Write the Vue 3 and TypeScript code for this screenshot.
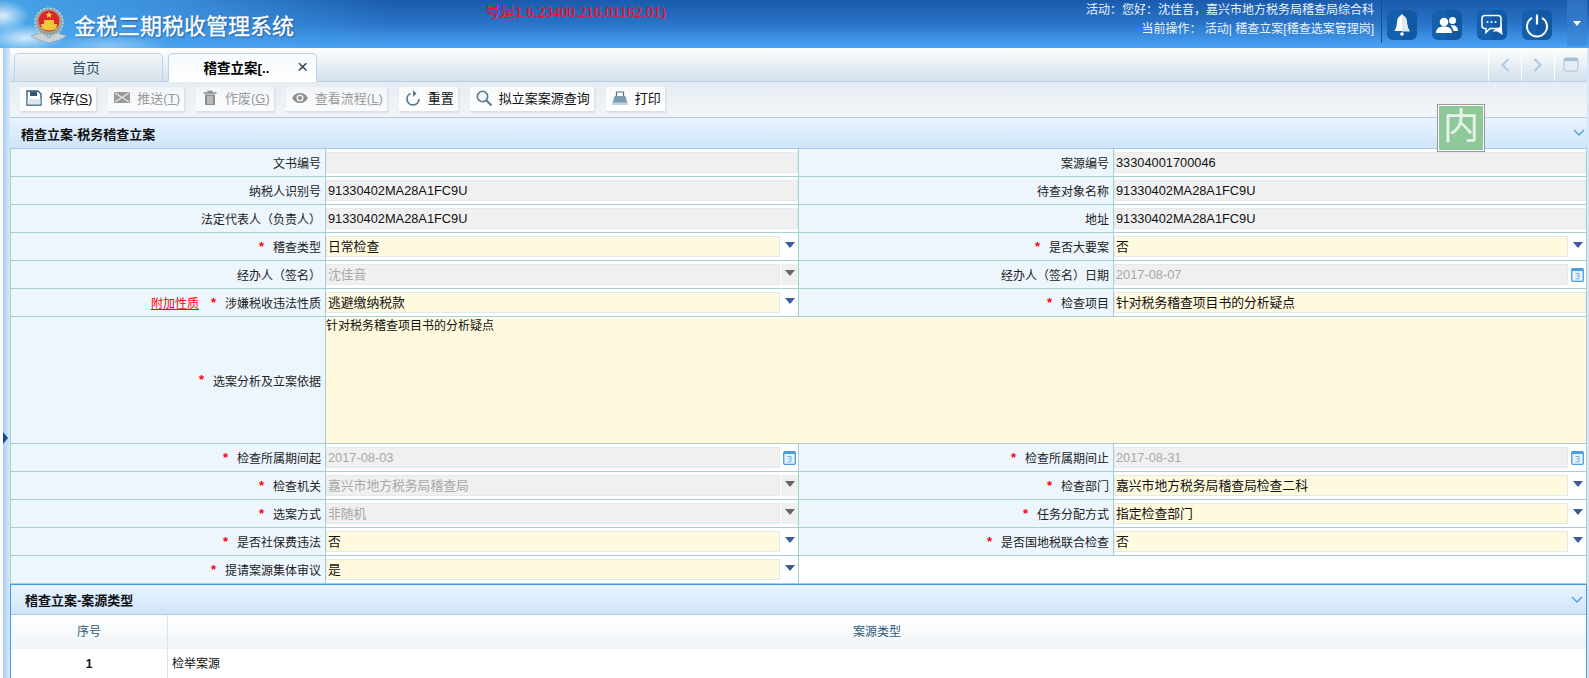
<script setup lang="ts">
interface Field {
  label: string
  value?: string
  req?: boolean
  kind?: 'ro' | 'edit' | 'off' | 'area' | 'empty'
  icon?: 'select' | 'date'
  link?: string
}
const SN = '91330402MA28A1FC9U'
const AREA = '针对税务稽查项目书的分析疑点'
const fields: Field[] = [
  { label: '文书编号', value: '', kind: 'ro' },
  { label: '案源编号', value: '33304001700046', kind: 'ro' },
  { label: '纳税人识别号', value: SN, kind: 'ro' },
  { label: '待查对象名称', value: SN, kind: 'ro' },
  { label: '法定代表人（负责人）', value: SN, kind: 'ro' },
  { label: '地址', value: SN, kind: 'ro' },
  { label: '稽查类型', value: '日常检查', req: true, kind: 'edit', icon: 'select' },
  { label: '是否大要案', value: '否', req: true, kind: 'edit', icon: 'select' },
  { label: '经办人（签名）', value: '沈佳音', kind: 'off', icon: 'select' },
  { label: '经办人（签名）日期', value: '2017-08-07', kind: 'off', icon: 'date' },
  { label: '涉嫌税收违法性质', value: '逃避缴纳税款', req: true, kind: 'edit', icon: 'select', link: '附加性质' },
  { label: '检查项目', value: AREA, req: true, kind: 'edit' },
  { label: '选案分析及立案依据', value: AREA, req: true, kind: 'area' },
  { label: '检查所属期间起', value: '2017-08-03', req: true, kind: 'off', icon: 'date' },
  { label: '检查所属期间止', value: '2017-08-31', req: true, kind: 'off', icon: 'date' },
  { label: '检查机关', value: '嘉兴市地方税务局稽查局', req: true, kind: 'off', icon: 'select' },
  { label: '检查部门', value: '嘉兴市地方税务局稽查局检查二科', req: true, kind: 'edit', icon: 'select' },
  { label: '选案方式', value: '非随机', req: true, kind: 'off', icon: 'select' },
  { label: '任务分配方式', value: '指定检查部门', req: true, kind: 'edit', icon: 'select' },
  { label: '是否社保费违法', value: '否', req: true, kind: 'edit', icon: 'select' },
  { label: '是否国地税联合检查', value: '否', req: true, kind: 'edit', icon: 'select' },
  { label: '提请案源集体审议', value: '是', req: true, kind: 'edit', icon: 'select' },
]
</script>

<template>
  <div class="page">
    <header class="top">
      <svg class="logo" viewBox="0 0 38 37" width="38" height="37">
        <path d="M1 29 L11 26 L19 31 L27 26 L37 29 L29 33 L19 36 L9 33 Z" fill="#c9d2d6" stroke="#8b9aa0" stroke-width=".6" />
        <circle cx="19" cy="15" r="14" fill="#9aa5a0" />
        <circle cx="19" cy="15" r="14" fill="none" stroke="#d7ddd9" stroke-width="1.2" stroke-dasharray="2 1.5" />
        <circle cx="19" cy="14" r="10.5" fill="#e0262a" />
        <path d="M19 4.5 l1 2.4 2.5.1-2 1.6.7 2.4-2.2-1.4-2.2 1.4.7-2.4-2-1.6 2.5-.1z" fill="#f6d43c" />
        <path d="M11 17h16v2H11zM14 13h10v4H14zM11 21q8 5 16 0l-1-2H12z" fill="#f0c93a" />
      </svg>
      <span class="title">金税三期税收管理系统</span>
      <span class="version">号是1.6.23400.216.01162.01)</span>
      <div class="who">
        <div>活动：您好：沈佳音，嘉兴市地方税务局稽查局综合科</div>
        <div>当前操作： 活动| 稽查立案[稽查选案管理岗]</div>
      </div>
      <div class="top-actions">
        <button class="round" type="button" aria-label="通知">
          <svg viewBox="0 0 30 30" width="30" height="30"><path d="M15 4.5c1 0 1.6.7 1.6 1.6 2.4.8 3.2 3 3.4 6 .2 4.300 1 6.700 2.800 9H7.200c1.800-2.300 2.600-4.700 2.800-9 .2-3 1-5.200 3.400-6 0-.9.600-1.600 1.600-1.600z" fill="#fff" /><path d="M15 6l3 1c1.500 2 2 9 4.800 14.600H15z" fill="#dfe7ef" /><circle cx="15" cy="24" r="1.800" fill="#fff" /></svg>
        </button>
        <button class="round" type="button" aria-label="用户">
          <svg viewBox="0 0 30 30" width="30" height="30"><circle cx="12" cy="12" r="4.300" fill="#fff" /><path d="M4 23c0-4.500 3-6.500 8-6.500s8 2 8 6.500z" fill="#fff" /><circle cx="20.500" cy="10.500" r="3.500" fill="#fff" /><path d="M18.500 15.500c4-1 7.500 1 7.500 5.500h-4.500c-.5-2.500-1.500-4-3-5.500z" fill="#fff" /></svg>
        </button>
        <button class="round" type="button" aria-label="消息">
          <svg viewBox="0 0 30 30" width="30" height="30"><path d="M8 5.500h13a3 3 0 0 1 3 3v7a3 3 0 0 1-3 3h-8l-4 4v-4H8a3 3 0 0 1-3-3v-7a3 3 0 0 1 3-3z" fill="none" stroke="#fff" stroke-width="1.500" /><circle cx="10.500" cy="12" r="1" fill="#fff" /><circle cx="14.500" cy="12" r="1" fill="#fff" /><circle cx="18.500" cy="12" r="1" fill="#fff" /><path d="M25 13v7l.5 5-5-3.500h-5l3-2.500h4z" fill="#fff" /></svg>
        </button>
        <button class="round" type="button" aria-label="退出">
          <svg viewBox="0 0 30 30" width="30" height="30"><path d="M10 7.800a10 10 0 1 0 10 0" fill="none" stroke="#fff" stroke-width="2" /><path d="M15 4.500v10" stroke="#fff" stroke-width="2.200" /></svg>
        </button>
      </div>
      <div class="more"><i></i></div>
    </header>

    <div class="body">
      <aside class="strip"><i class="strip-arrow"></i></aside>
      <main class="main">
        <nav class="tabs">
          <div class="tab">首页</div>
          <div class="tab active">稽查立案[..<span class="close">×</span></div>
          <div class="tab-tools">
            <span class="tool"><svg viewBox="0 0 12 16" width="12" height="16"><path d="M9.500 2 3.500 8l6 6" fill="none" stroke="#b3cbe2" stroke-width="2.200" /></svg></span>
            <span class="tool"><svg viewBox="0 0 12 16" width="12" height="16"><path d="M2.500 2l6 6-6 6" fill="none" stroke="#b3cbe2" stroke-width="2.200" /></svg></span>
            <span class="tool"><svg viewBox="0 0 16 15" width="16" height="15"><rect x="1" y="1" width="14" height="13" rx="2" fill="#e4edf5" stroke="#a9bfd3" /><rect x="1" y="1" width="14" height="3" fill="#a9bfd3" /></svg></span>
          </div>
        </nav>

        <div class="toolbar">
          <button class="btn" type="button">
            <svg viewBox="0 0 18 18" width="18" height="18"><path d="M2 2h11l3 3v11H2z" fill="#fff" stroke="#33566e" stroke-width="1.300" /><path d="M5 2.500h7v4.500H5z" fill="#33566e" /><path d="M2.500 10h13v5.500h-13z" fill="#dbe7f1" /></svg>
            <span>保存(<u>S</u>)</span>
          </button>
          <button class="btn off" type="button">
            <svg viewBox="0 0 18 18" width="18" height="18"><rect x="1" y="3" width="16" height="11" fill="#9a9a9a" /><path d="M2 4l14 9M16 4 2 13" stroke="#e8e8e8" stroke-width="1.300" /></svg>
            <span>推送(<u>T</u>)</span>
          </button>
          <button class="btn off" type="button">
            <svg viewBox="0 0 18 18" width="18" height="18"><path d="M2.500 4h13M7 4V2.500h4V4" fill="none" stroke="#8d8d8d" stroke-width="1.300" /><path d="M4 5.500h10V16H4z" fill="#8d8d8d" /><path d="M7 7v8M9 7v8M11 7v8" stroke="#e3e3e3" /></svg>
            <span>作废(<u>G</u>)</span>
          </button>
          <button class="btn off" type="button">
            <svg viewBox="0 0 18 18" width="18" height="18"><path d="M1 9c2.500-4 5-5 8-5s5.500 1 8 5c-2.500 4-5 5-8 5s-5.500-1-8-5z" fill="#8d8d8d" /><circle cx="9" cy="9" r="3.500" fill="#f3f3f3" /><circle cx="9" cy="9" r="2" fill="#8d8d8d" /></svg>
            <span>查看流程(<u>L</u>)</span>
          </button>
          <button class="btn" type="button">
            <svg viewBox="0 0 18 18" width="18" height="18"><path d="M6.500 4.500A6 6 0 1 0 15 10" fill="none" stroke="#5c7a8e" stroke-width="1.800" /><path d="M9 1v7l3.500-3.500z" fill="#5c7a8e" /></svg>
            <span>重置</span>
          </button>
          <button class="btn" type="button">
            <svg viewBox="0 0 18 18" width="18" height="18"><circle cx="7.500" cy="7.500" r="5.200" fill="#eef4f8" stroke="#5c7a8e" stroke-width="1.600" /><path d="M11.500 11.500 16.500 16.500" stroke="#5c7a8e" stroke-width="2.200" /></svg>
            <span>拟立案案源查询</span>
          </button>
          <button class="btn" type="button">
            <svg viewBox="0 0 18 18" width="18" height="18"><path d="M5.500 7V3h7v4" fill="none" stroke="#55758a" stroke-width="1.200" /><path d="M3.500 7h11L17 16H1z" fill="#7f9db1" /><path d="M1 13.500h16V16H1z" fill="#c0d2de" /></svg>
            <span>打印</span>
          </button>
        </div>

        <section class="panel-head first">
          <h2>稽查立案-税务稽查立案</h2>
          <svg viewBox="0 0 12 8" width="12" height="8"><path d="M1 1l5 5 5-5" fill="none" stroke="#4a9fe0" stroke-width="1.300" /></svg>
        </section>

        <div class="form">
          <template v-for="f in fields" :key="f.label + f.value">
            <div class="label" :class="{ tall: f.kind === 'area' }">
              <a v-if="f.link" class="link">{{ f.link }}</a>
              <em v-if="f.req">*</em>
              <span>{{ f.label }}</span>
            </div>
            <div v-if="f.kind === 'area'" class="cell wide">
              <div class="area">{{ f.value }}</div>
            </div>
            <div v-else class="cell">
              <div class="input" :class="f.kind">{{ f.value }}</div>
              <div v-if="f.icon === 'select'" class="suffix" :class="{ dis: f.kind === 'off' }"><i></i></div>
              <div v-else-if="f.icon === 'date'" class="suffix">
                <svg viewBox="0 0 13 15" width="13" height="15"><rect x=".7" y="1.700" width="11.600" height="12.600" rx="1" fill="#e6f2fb" stroke="#4a9fe0" stroke-width="1.300" /><path d="M1 1h11v3H1z" fill="#4a9fe0" /><path d="M4.500 6.500H8V9H5.500M8 9v2.800H4.500" fill="none" stroke="#7fb0d6" /></svg>
              </div>
            </div>
          </template>
          <div class="cell blank"></div>
        </div>

        <section class="lower">
          <div class="panel-head second">
            <h2>稽查立案-案源类型</h2>
            <svg viewBox="0 0 12 8" width="12" height="8"><path d="M1 1l5 5 5-5" fill="none" stroke="#4a9fe0" stroke-width="1.300" /></svg>
          </div>
          <div class="grid head">
            <div>序号</div>
            <div>案源类型</div>
          </div>
          <div class="grid row">
            <div class="num">1</div>
            <div class="txt">检举案源</div>
          </div>
        </section>

        <div class="stamp">内</div>
      </main>
      <aside class="strip-r"></aside>
    </div>
  </div>
</template>

<style>
html, body { margin: 0; overflow: hidden; }
</style>

<style scoped>
.page {
  width: 1589px;
  height: 678px;
  overflow: hidden;
  background: #fff;
  color: #111;
  font: 12px "Liberation Sans", "Noto Sans CJK SC", sans-serif;
}
.top {
  height: 48px;
  display: flex;
  align-items: flex-start;
  background:
    radial-gradient(ellipse 40px 14px at 25px 38px, rgba(255,255,255,.75), transparent),
    radial-gradient(ellipse 26px 16px at 3px 16px, rgba(255,255,255,.8), transparent),
    radial-gradient(ellipse 60px 12px at 110px 46px, rgba(255,255,255,.35), transparent),
    linear-gradient(90deg, rgba(80,175,240,.85) 0, rgba(70,160,235,.7) 180px, rgba(60,150,230,0) 390px),
    linear-gradient(180deg, #1a5aac 0, #2a74c8 50%, #4aa5f6 100%);
}
.logo { margin: 7px 0 0 30px; flex: none; }
.title {
  margin: 11px 0 0 6px;
  color: #fff;
  font-size: 22px;
  line-height: 32px;
  -webkit-text-stroke: .3px #fff;
  text-shadow: 1px 1px 2px rgba(0, 40, 90, .6);
}
.version {
  margin: 2px 0 0 191px;
  color: #f5101c;
  -webkit-text-stroke: .25px #f5101c;
  font: 15px/20px "Liberation Serif", "Noto Sans CJK SC", serif;
}
.who {
  margin-left: auto;
  padding-top: 1px;
  color: #eaf3fc;
  text-align: right;
  line-height: 19px;
  white-space: nowrap;
}
.top-actions {
  margin-left: 7px;
  height: 43px;
  padding: 10px 0 0 5px;
  box-sizing: border-box;
  border-left: 1px solid #14508f;
  display: flex;
  gap: 15px;
}
.round {
  width: 30px;
  height: 30px;
  padding: 0;
  border: 0;
  border-radius: 6px;
  background: linear-gradient(90deg, #1560ac 50%, #1259a3 50%);
}
.round svg { display: block; }
.more {
  width: 20px;
  height: 46px;
  margin: 0 2px 0 15px;
  background: rgba(60, 130, 210, .55);
  display: flex;
  align-items: center;
  justify-content: center;
}
.more i {
  border: 4px solid transparent;
  border-top: 5px solid #fff;
  border-bottom: 0;
}
.body { display: flex; height: 630px; }
.strip {
  width: 7px;
  margin-left: 3px;
  position: relative;
  background: linear-gradient(90deg, #a9cff3, #d5e8fa);
}
.strip-arrow {
  position: absolute;
  left: 0;
  top: 384px;
  border: 6px solid transparent;
  border-left: 5px solid #17488e;
  border-right: 0;
}
.strip-r { width: 2px; background: #d5e8fa; }
.main { width: 1577px; position: relative; }
.tabs {
  height: 34px;
  box-sizing: border-box;
  padding-left: 4px;
  display: flex;
  align-items: flex-end;
  gap: 5px;
  background: linear-gradient(180deg, #fdfefe, #d3e0ec);
  border-bottom: 1px solid #b5cfe6;
}
.tab {
  width: 149px;
  height: 29px;
  box-sizing: border-box;
  margin-bottom: -1px;
  padding-right: 5px;
  border: 1px solid #bcd2e8;
  border-radius: 5px 5px 0 0;
  background: linear-gradient(180deg, #f2f6f9, #d6e1ea);
  color: #30506a;
  font-size: 14px;
  line-height: 29px;
  text-align: center;
}
.tab.active {
  position: relative;
  padding-right: 12px;
  background: linear-gradient(180deg, #f6fafd, #fff);
  border-bottom-color: #fff;
  color: #000;
  font-size: 13.500px;
  font-weight: 700;
}
.close {
  position: absolute;
  right: 8px;
  top: -2px;
  color: #2c4258;
  font-size: 19px;
  font-weight: 400;
}
.tab-tools { margin-left: auto; height: 33px; display: flex; }
.tool {
  width: 32px;
  border-left: 1px solid #fff;
  display: flex;
  align-items: center;
  justify-content: center;
}
.toolbar {
  height: 36px;
  box-sizing: border-box;
  padding: 5px 0 0 10px;
  display: flex;
  gap: 12px;
  background: linear-gradient(180deg, #e5edf3, #f2f5f8);
  border-bottom: 1px solid #a9cbe8;
}
.btn {
  height: 25px;
  padding: 0 4px 3px 5px;
  border: 0;
  border-bottom: 1px solid #d9dfe5;
  display: flex;
  align-items: center;
  gap: 6px;
  background: linear-gradient(180deg, #f7fafc, #fff);
  box-shadow: 1px 1px 2px rgba(170, 185, 200, .4);
  color: #111;
  font: 13px "Liberation Sans", "Noto Sans CJK SC", sans-serif;
  white-space: nowrap;
}
.btn.off { color: #9a9a9a; background: linear-gradient(180deg, #f2f5f8, #fafbfc); }
.panel-head {
  display: flex;
  align-items: center;
  justify-content: space-between;
  box-sizing: border-box;
  border-bottom: 1px solid #a6cbe8;
  background: linear-gradient(180deg, #e8f4fe, #cfe5fb);
}
.panel-head h2 { margin: 0; font-weight: 700; color: #111; font-size: 13px; }
.first { height: 31px; padding: 0 2px 0 11px; }
.second { height: 31px; padding: 0 3px 0 14px; border-top: 1px solid #3f9be8; }
.form {
  display: grid;
  grid-template-columns: 315px 473px 315px 473px;
  border-left: 1px solid #a8cfd0;
}
.label, .cell {
  box-sizing: border-box;
  height: 28px;
  border-bottom: 1px solid #a8cfd0;
  border-right: 1px solid #a8cfd0;
}
.label {
  padding-right: 4px;
  display: flex;
  align-items: center;
  justify-content: flex-end;
  background: #edf5fd;
  color: #222;
  white-space: nowrap;
}
.label.tall { height: 127px; }
.label em {
  margin-right: 9px;
  color: #f00;
  font-style: normal;
  font-weight: 700;
  font-size: 13px;
  line-height: 12px;
}
.link {
  margin-right: 12px;
  color: #f00;
  text-decoration: underline;
}
.cell {
  padding: 3px 0 0;
  display: flex;
  background: #fff;
}
.cell.wide { grid-column: span 3; height: 127px; padding: 1px 0 0 0; }
.cell.blank { grid-column: span 2; }
.input {
  flex: 1;
  min-width: 0;
  height: 21px;
  box-sizing: border-box;
  border: 1px solid #e1ebef;
  padding-left: 1px;
  font-size: 12.8px;
  line-height: 19px;
  color: #111;
  white-space: nowrap;
}
.input.ro { background: #f0f0f0; }
.input.off { background: #f0f0f0; color: #a8a8a8; }
.input.edit { background: #fff9dd; }
.suffix {
  width: 17px;
  height: 21px;
  margin-left: 1px;
  display: flex;
  justify-content: center;
  padding-top: 6px;
  box-sizing: border-box;
}
.suffix svg { margin-top: -3px; flex: none; }
.suffix i {
  border: 5px solid transparent;
  border-top: 6px solid #3a5a9a;
  border-bottom: 0;
  height: 0;
}
.suffix.dis { background: #f0f0f0; }
.suffix.dis i { border-top-color: #666; }
.area {
  flex: 1;
  height: 125px;
  background: #fff9dd;
  line-height: 17px;
  color: #111;
}
.lower {
  border-left: 1px solid #3f9be8;
  border-right: 1px solid #3f9be8;
}
.grid {
  display: grid;
  grid-template-columns: 156px 1fr;
}
.grid > div + div { border-left: 1px solid #dbe3ea; }
.head {
  height: 34px;
  background: linear-gradient(180deg, #fff, #f0f4f8);
  color: #2d5a7a;
  line-height: 35px;
  text-align: center;
}
.row { height: 29px; line-height: 30px; }
.num { text-align: center; font-weight: 700; }
.txt { padding-left: 4px; }
.stamp {
  position: absolute;
  left: 1427px;
  top: 56px;
  width: 48px;
  height: 48px;
  box-sizing: border-box;
  border: 1px solid #999;
  outline: 1px solid #fff;
  outline-offset: -2px;
  background: #8fc898;
  color: #e6f3ea;
  font-size: 36px;
  line-height: 44px;
  text-align: center;
}
</style>
